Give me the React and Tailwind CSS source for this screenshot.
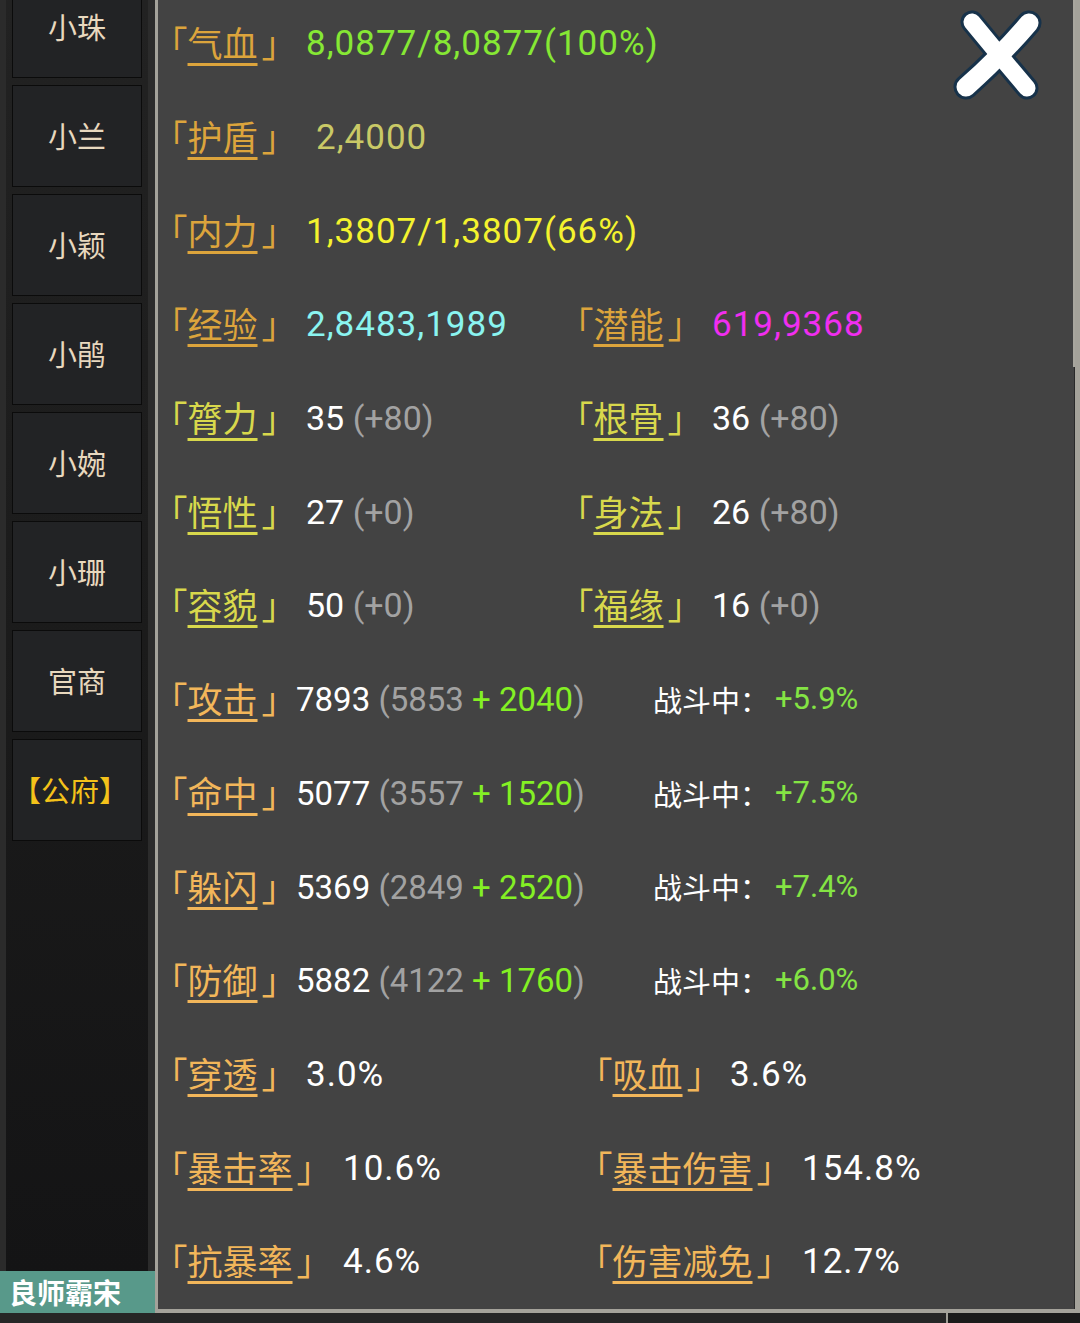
import React from "react";

const GOLD = "text-[#dca43c] decoration-[#dca43c]";
const LIME = "text-[#d8d84c] decoration-[#d8d84c]";
const ORANGE = "text-[#f2b65a] decoration-[#f2b65a]";

const members = ["小珠", "小兰", "小颖", "小鹃", "小婉", "小珊", "官商"];

// half-width corner brackets around the underlined name
const Label = ({ text, tone }) => (
	<span className={`inline-flex items-baseline font-['Noto_Sans_CJK_SC',sans-serif] text-[35px] leading-none whitespace-nowrap ${tone}`}>
		<span className="[font-feature-settings:'halt'] pl-[3px]">「</span>
		<span className="underline decoration-[2.5px] underline-offset-[6px]">{text}</span>
		<span className="[font-feature-settings:'halt'] pl-[4px]">」</span>
	</span>
);

// label + value pair; w puts the value at its column
const Pair = ({ label, tone, w, children }) => (
	<div className="flex items-center">
		<div className="shrink-0" style={{ width: w }}>
			<Label text={label} tone={tone} />
		</div>
		<div className="font-['Roboto','Noto_Sans_CJK_SC',sans-serif] text-[35px] tracking-[1px] leading-none whitespace-nowrap">
			{children}
		</div>
	</div>
);

const Attr = ({ base, bonus }) => (
	<span className="tracking-normal text-[34px]">
		<span className="text-white">{base}</span>{" "}
		<span className="text-[#a2a2a2]">{bonus}</span>
	</span>
);

const Combat = ({ total, base, extra }) => (
	<span className="text-[33px] tracking-normal">
		<span className="text-white">{total}</span>{" "}
		<span className="text-[#a2a2a2]">({base} </span>
		<span className="text-[#84f024]">+ {extra}</span>
		<span className="text-[#a2a2a2]">)</span>
	</span>
);

const InFight = ({ pct }) => (
	<div className="flex items-center whitespace-nowrap">
		<span className="w-[122px] font-['Noto_Sans_CJK_SC',sans-serif] text-[29px] text-white">战斗中：</span>
		<span className="font-['Roboto',sans-serif] text-[31px] text-[#84e444]">{pct}</span>
	</div>
);

// one line of the panel; right part starts at col px from the left edge
const Row = ({ col, left, right }) => (
	<div className="flex items-center h-[93.7px]">
		<div className="shrink-0" style={{ width: col }}>
			{left}
		</div>
		{right}
	</div>
);

const CloseButton = () => (
	<svg className="absolute right-[30px] top-[3px]" width="92" height="100" viewBox="0 0 92 100">
		<g strokeLinecap="round" fill="none">
			<path d="M19 19 Q46 52 74 85" stroke="#17324a" strokeWidth="23" />
			<path d="M76 20 Q46 55 13 84" stroke="#17324a" strokeWidth="25" />
			<path d="M19 19 Q46 52 74 85" stroke="#ffffff" strokeWidth="17" />
			<path d="M76 20 Q46 55 13 84" stroke="#ffffff" strokeWidth="19" />
		</g>
	</svg>
);

const Sidebar = () => (
	<div className="w-[155px] shrink-0 flex flex-col">
		<div className="flex-1 border-l-[6px] border-r-[7px] border-[#2b2b2b] bg-gradient-to-b from-[#222222] via-[#1b1b1b] to-[#141415] overflow-hidden">
			<div className="flex flex-col mt-[-24px] pl-[6px]">
				{members.map((name) => (
					<div
						key={name}
						className="w-[130px] h-[102px] mb-[7px] flex items-center justify-center border border-[#0b0b0b] bg-[#222325] font-['Noto_Sans_CJK_SC',sans-serif] text-[29px] text-[#e8d8be]"
					>
						{name}
					</div>
				))}
				<div className="w-[130px] h-[102px] flex items-center justify-center pr-[14px] border border-[#0b0b0b] bg-[#222325] font-['Noto_Sans_CJK_SC',sans-serif] text-[29px] text-[#f4c21a] [font-feature-settings:'halt']">
					【公府】
				</div>
			</div>
		</div>
		<div className="h-[42px] bg-[#58998a] flex items-center pl-[9px] font-['Noto_Sans_CJK_SC',sans-serif] font-bold text-[28px] text-white">
			良师霸宋
		</div>
	</div>
);

export default function App() {
	return (
		<div className="w-[1080px] h-[1323px] bg-[#1d1d1d] flex flex-col overflow-hidden">
			<div className="flex h-[1313px]">
				<Sidebar />
				<div className="relative flex-1 bg-[#434343] border-l-[3px] border-b-[4px] border-r-[5px] border-[#a4a29a] overflow-hidden">
					<div className="absolute right-[-5px] top-0 w-[7px] h-[367px] bg-[#a8a69e]"></div>
					<div className="absolute right-0 top-[367px] bottom-0 w-[1px] bg-[#2a2a2a]"></div>
					<CloseButton />
					<div className="flex flex-col pl-[9px] mt-[-3px]">
						<Row
							col={406}
							left={
								<Pair label="气血" tone={GOLD} w={139}>
									<span className="text-[#86e834]">8,0877/8,0877(100%)</span>
								</Pair>
							}
						/>
						<Row
							col={406}
							left={
								<Pair label="护盾" tone={GOLD} w={149}>
									<span className="text-[#c9c966]">2,4000</span>
								</Pair>
							}
						/>
						<Row
							col={406}
							left={
								<Pair label="内力" tone={GOLD} w={139}>
									<span className="text-[#f4f22e]">1,3807/1,3807(66%)</span>
								</Pair>
							}
						/>
						<Row
							col={406}
							left={
								<Pair label="经验" tone={GOLD} w={139}>
									<span className="text-[#8af4f0]">2,8483,1989</span>
								</Pair>
							}
							right={
								<Pair label="潜能" tone={GOLD} w={139}>
									<span className="text-[#f02ef0]">619,9368</span>
								</Pair>
							}
						/>
						<Row
							col={406}
							left={
								<Pair label="膂力" tone={LIME} w={139}>
									<Attr base="35" bonus="(+80)" />
								</Pair>
							}
							right={
								<Pair label="根骨" tone={LIME} w={139}>
									<Attr base="36" bonus="(+80)" />
								</Pair>
							}
						/>
						<Row
							col={406}
							left={
								<Pair label="悟性" tone={LIME} w={139}>
									<Attr base="27" bonus="(+0)" />
								</Pair>
							}
							right={
								<Pair label="身法" tone={LIME} w={139}>
									<Attr base="26" bonus="(+80)" />
								</Pair>
							}
						/>
						<Row
							col={406}
							left={
								<Pair label="容貌" tone={LIME} w={139}>
									<Attr base="50" bonus="(+0)" />
								</Pair>
							}
							right={
								<Pair label="福缘" tone={LIME} w={139}>
									<Attr base="16" bonus="(+0)" />
								</Pair>
							}
						/>
						{[
							["攻击", "7893", "5853", "2040", "+5.9%"],
							["命中", "5077", "3557", "1520", "+7.5%"],
							["躲闪", "5369", "2849", "2520", "+7.4%"],
							["防御", "5882", "4122", "1760", "+6.0%"],
						].map(([label, total, base, extra, pct]) => (
							<Row
								key={label}
								col={486}
								left={
									<Pair label={label} tone={ORANGE} w={129}>
										<Combat total={total} base={base} extra={extra} />
									</Pair>
								}
								right={<InFight pct={pct} />}
							/>
						))}
						<Row
							col={425}
							left={
								<Pair label="穿透" tone={ORANGE} w={139}>
									<span className="text-white">3.0%</span>
								</Pair>
							}
							right={
								<Pair label="吸血" tone={ORANGE} w={138}>
									<span className="text-white">3.6%</span>
								</Pair>
							}
						/>
						<Row
							col={425}
							left={
								<Pair label="暴击率" tone={ORANGE} w={176}>
									<span className="text-white">10.6%</span>
								</Pair>
							}
							right={
								<Pair label="暴击伤害" tone={ORANGE} w={210}>
									<span className="text-white">154.8%</span>
								</Pair>
							}
						/>
						<Row
							col={425}
							left={
								<Pair label="抗暴率" tone={ORANGE} w={176}>
									<span className="text-white">4.6%</span>
								</Pair>
							}
							right={
								<Pair label="伤害减免" tone={ORANGE} w={210}>
									<span className="text-white">12.7%</span>
								</Pair>
							}
						/>
					</div>
				</div>
			</div>
			<div className="flex-1 flex">
				<div className="w-[946px] bg-[#262626]"></div>
				<div className="w-[2px] bg-[#a09e96]"></div>
				<div className="flex-1 bg-[#1a1a1a]"></div>
			</div>
		</div>
	);
}
